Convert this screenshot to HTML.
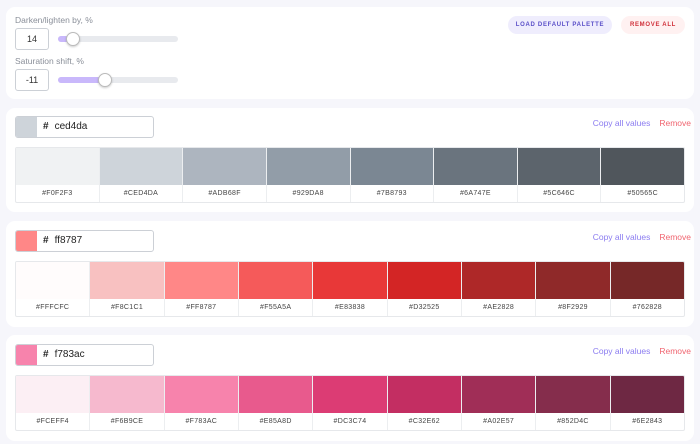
<!DOCTYPE html>
<html><head><style>
*{box-sizing:border-box;margin:0;padding:0}
body{width:700px;height:444px;background:#f6f6fb;font-family:"Liberation Sans",sans-serif;position:relative;overflow:hidden}
.card{position:absolute;left:6px;width:688px;background:#fff;border-radius:9px}
.lbl{position:absolute;left:15px;font-size:8.5px;color:#8a8f99}
.num{position:absolute;left:15px;width:34px;height:22px;border:1px solid #ccd0d6;border-radius:3px;font-size:9px;color:#333;text-align:center;line-height:20px}
.track{position:absolute;left:58px;width:120px;height:6px;border-radius:3px;background:#e8eaee}
.fill{position:absolute;left:0;top:0;height:6px;border-radius:3px;background:#c9b8fb}
.knob{position:absolute;top:-4px;width:14px;height:14px;border-radius:50%;background:#fff;border:1px solid #bbb;box-shadow:0 1px 2px rgba(0,0,0,.2)}
.btn{position:absolute;top:16px;height:18px;border-radius:9px;font-size:6px;font-weight:bold;letter-spacing:0.7px;text-align:center;line-height:18px;white-space:nowrap}
.inp{position:absolute;left:15px;width:139px;height:22px;border:1px solid #ccd0d6;border-radius:3px;overflow:hidden;background:#fff}
.inp .sw{position:absolute;left:0;top:0;width:21px;height:20px}
.inp .t{position:absolute;left:27px;top:0;line-height:20px;font-size:10px;color:#222}
.inp .t b{margin-right:6px}
.links{position:absolute;right:9px;font-size:8.5px}
.links span{margin-left:9px}
.grid{position:absolute;left:15px;width:670px;height:56px;display:flex;border:1px solid #e6e8eb;border-radius:2px;overflow:hidden}
.grid div{flex:1;border-right:1px solid #eceef0;position:relative}
.grid div:last-child{border-right:none}
.grid i{display:block;height:37px}
.grid span{display:block;text-align:center;font-size:7px;color:#444;line-height:18px;letter-spacing:0.3px}
</style></head><body>
<div class="card" style="top:7px;height:92px"></div>
<div class="lbl" style="top:15px">Darken/lighten by, %</div>
<div class="num" style="top:28px">14</div>
<div class="track" style="top:36px"><div class="fill" style="width:14px"></div><div class="knob" style="left:8px"></div></div>
<div class="lbl" style="top:56px">Saturation shift, %</div>
<div class="num" style="top:69px">-11</div>
<div class="track" style="top:77px"><div class="fill" style="width:46px"></div><div class="knob" style="left:40px"></div></div>
<div class="btn" style="left:508px;width:104px;background:#efedfd;color:#5a4fc8">LOAD DEFAULT PALETTE</div>
<div class="btn" style="left:621px;width:64px;background:#fff1f1;color:#d0303a">REMOVE ALL</div>

<div class="card" style="top:108px;height:104px"></div>
<div class="inp" style="top:116px"><div class="sw" style="background:#ced4da"></div><div class="t"><b>#</b>ced4da</div></div>
<div class="links" style="top:118px"><span style="color:#8b7cf0">Copy all values</span><span style="color:#f06570">Remove</span></div>
<div class="grid" style="top:147px">
<div><i style="background:#F0F2F3"></i><span>#F0F2F3</span></div>
<div><i style="background:#CED4DA"></i><span>#CED4DA</span></div>
<div><i style="background:#adb5bf"></i><span>#ADB68F</span></div>
<div><i style="background:#929DA8"></i><span>#929DA8</span></div>
<div><i style="background:#7B8793"></i><span>#7B8793</span></div>
<div><i style="background:#6A747E"></i><span>#6A747E</span></div>
<div><i style="background:#5C646C"></i><span>#5C646C</span></div>
<div><i style="background:#50565C"></i><span>#50565C</span></div>
</div>

<div class="card" style="top:221px;height:106px"></div>
<div class="inp" style="top:230px"><div class="sw" style="background:#ff8787"></div><div class="t"><b>#</b>ff8787</div></div>
<div class="links" style="top:232px"><span style="color:#8b7cf0">Copy all values</span><span style="color:#f06570">Remove</span></div>
<div class="grid" style="top:261px">
<div><i style="background:#FFFCFC"></i><span>#FFFCFC</span></div>
<div><i style="background:#F8C1C1"></i><span>#F8C1C1</span></div>
<div><i style="background:#FF8787"></i><span>#FF8787</span></div>
<div><i style="background:#F55A5A"></i><span>#F55A5A</span></div>
<div><i style="background:#E83838"></i><span>#E83838</span></div>
<div><i style="background:#D32525"></i><span>#D32525</span></div>
<div><i style="background:#AE2828"></i><span>#AE2828</span></div>
<div><i style="background:#8F2929"></i><span>#8F2929</span></div>
<div><i style="background:#762828"></i><span>#762828</span></div>
</div>

<div class="card" style="top:335px;height:106px"></div>
<div class="inp" style="top:344px"><div class="sw" style="background:#f783ac"></div><div class="t"><b>#</b>f783ac</div></div>
<div class="links" style="top:346px"><span style="color:#8b7cf0">Copy all values</span><span style="color:#f06570">Remove</span></div>
<div class="grid" style="top:375px">
<div><i style="background:#FCEFF4"></i><span>#FCEFF4</span></div>
<div><i style="background:#F6B9CE"></i><span>#F6B9CE</span></div>
<div><i style="background:#F783AC"></i><span>#F783AC</span></div>
<div><i style="background:#E85A8D"></i><span>#E85A8D</span></div>
<div><i style="background:#DC3C74"></i><span>#DC3C74</span></div>
<div><i style="background:#C32E62"></i><span>#C32E62</span></div>
<div><i style="background:#A02E57"></i><span>#A02E57</span></div>
<div><i style="background:#852D4C"></i><span>#852D4C</span></div>
<div><i style="background:#6E2843"></i><span>#6E2843</span></div>
</div>
</body></html>
